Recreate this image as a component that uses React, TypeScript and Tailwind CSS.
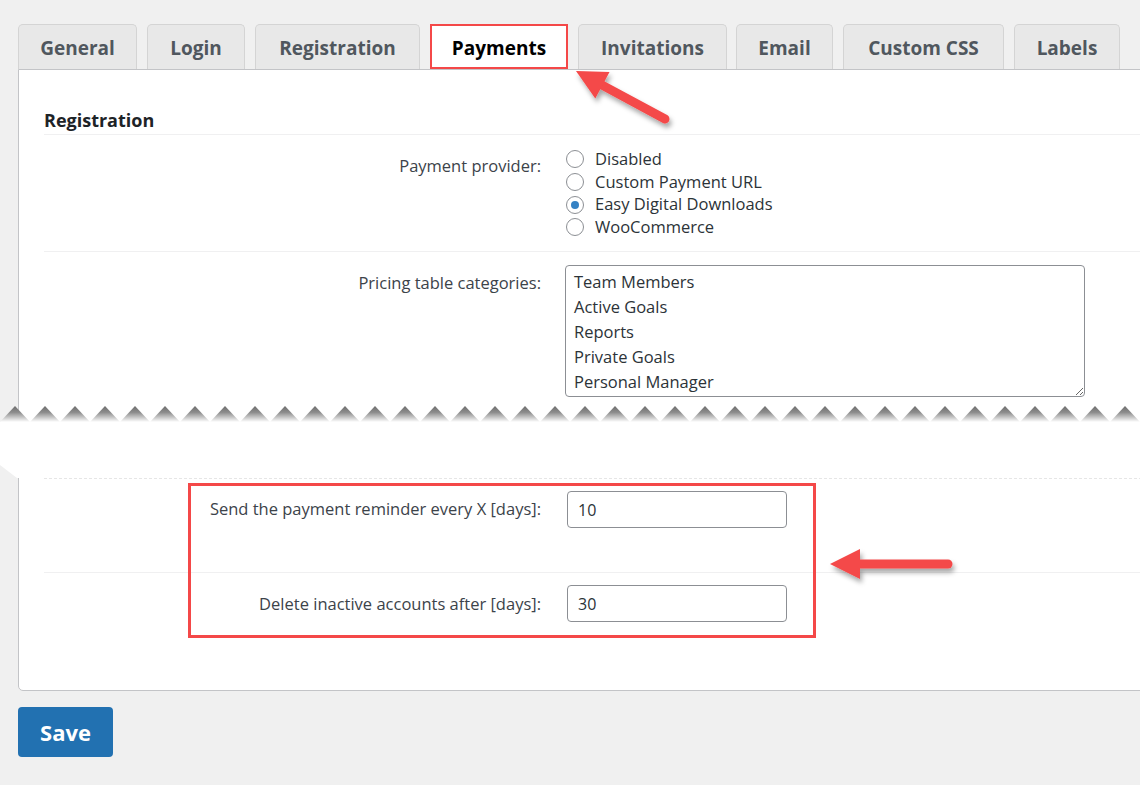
import React from "react";

const tabs = [
  { name: "General", w: "w-[119px]" },
  { name: "Login", w: "w-[98px]" },
  { name: "Registration", w: "w-[165px]" },
  { name: "Payments", w: "w-[138px]", active: true },
  { name: "Invitations", w: "w-[149px]" },
  { name: "Email", w: "w-[97px]" },
  { name: "Custom CSS", w: "w-[161px]" },
  { name: "Labels", w: "w-[106px]" },
];

const providers = ["Disabled", "Custom Payment URL", "Easy Digital Downloads", "WooCommerce"];
const categories = ["Team Members", "Active Goals", "Reports", "Private Goals", "Personal Manager"];

// radio button like the wp-admin one
function Radio({ checked, label }: { checked?: boolean; label: string }) {
  return (
    <label className="flex h-[22.7px] items-center gap-[11px] text-[#2c3338]">
      <span className="flex h-[18px] w-[18px] items-center justify-center rounded-full border border-[#8c8f94] bg-white">
        {checked && <span className="h-[8px] w-[8px] rounded-full bg-[#3582c4]" />}
      </span>
      {label}
    </label>
  );
}

// torn paper strip across the page
function TornStrip() {
  const teeth = [];
  for (let i = 0; i < 39; i++) {
    const x = i * 30;
    teeth.push(`${x},17 ${x + 15},1 ${x + 30},17`);
  }
  return (
    <svg className="absolute left-0 top-[405px]" width="1140" height="76" viewBox="0 0 1140 76">
      <defs>
        <linearGradient id="shade" x1="0" y1="0" x2="0" y2="1">
          <stop offset="0" stopColor="#6e6e6e" />
          <stop offset="0.4" stopColor="#8c8c8c" />
          <stop offset="0.75" stopColor="#cfcfcf" />
          <stop offset="1" stopColor="#ffffff" />
        </linearGradient>
      </defs>
      <path d="M0,17 L1140,17 L1140,73 L17,73 L0,60 Z" fill="#fff" />
      {teeth.map((p, i) => (
        <polygon key={i} points={p} fill="url(#shade)" />
      ))}
    </svg>
  );
}

// red callout arrow with a soft shadow
function Arrow({ x1, y1, x2, y2 }: { x1: number; y1: number; x2: number; y2: number }) {
  const ang = Math.atan2(y2 - y1, x2 - x1);
  const len = 30;
  const half = 15;
  const bx = x2 - Math.cos(ang) * len;
  const by = y2 - Math.sin(ang) * len;
  const px = -Math.sin(ang) * half;
  const py = Math.cos(ang) * half;
  return (
    <g filter="url(#arrowShadow)">
      <line x1={x1} y1={y1} x2={bx + Math.cos(ang) * 4} y2={by + Math.sin(ang) * 4} stroke="#f44848" strokeWidth="9" strokeLinecap="round" />
      <polygon points={`${x2},${y2} ${bx + px},${by + py} ${bx - px},${by - py}`} fill="#f44848" />
    </g>
  );
}

export default function App() {
  return (
    <div className="relative h-[785px] w-[1140px] overflow-hidden bg-[#f0f0f0] pl-[18px] pt-6 font-['Open_Sans',sans-serif] text-[16.5px]">
      {/* tabs */}
      <div className="flex gap-[10px]">
        {tabs.map((t, i) =>
          t.active ? (
            <div key={t.name} className={`${t.w} relative z-10 flex h-[45px] items-center justify-center border-2 border-[#f44848] bg-white pt-[3px] text-[19px] font-bold text-black`}>
              {t.name}
            </div>
          ) : (
            <div
              key={t.name}
              className={`${t.w} ${i === 4 ? "mr-[-1px]" : ""} flex h-[45px] items-center justify-center rounded-t-[5px] border border-b-0 border-[#d4d4d4] bg-[#e8e8e8] pt-[3px] text-[19px] font-bold text-[#50575e]`}
            >
              {t.name}
            </div>
          )
        )}
      </div>

      {/* settings panel */}
      <div className="h-[622px] w-[1140px] rounded-bl-[5px] border border-[#c3c4c7] bg-white pl-[25px] text-[#3c434a]">
        <h2 className="border-b border-[#f0f0f1] pb-[2px] pt-[38px] text-[18px] font-bold leading-[24px] text-[#1d2327]">Registration</h2>

        <div className="flex border-b border-[#f0f0f1]">
          <div className="w-[497px] pt-[20px] text-right leading-[22px]">Payment provider:</div>
          <div className="pb-[12px] pl-[25px] pt-[13px]">
            {providers.map((p, i) => (
              <Radio key={p} label={p} checked={i === 2} />
            ))}
          </div>
        </div>

        <div className="flex h-[226px]">
          <div className="w-[497px] pt-[20px] text-right leading-[22px]">Pricing table categories:</div>
          <div className="pl-[24px] pt-[13px]">
            <textarea
              readOnly
              defaultValue={categories.join("\n")}
              className="block h-[132px] w-[520px] overflow-hidden rounded-[4px] border border-[#8c8f94] px-[8px] pt-[3px] text-[16.5px] leading-[25px] text-[#2c3338] outline-none"
            />
          </div>
        </div>

        <div className="flex h-[94px] border-t border-dashed border-[#e6e6e6]">
          <div className="w-[497px] pt-[19px] text-right leading-[22px]">Send the payment reminder every X [days]:</div>
          <div className="pl-[26px] pt-[12px]">
            <input readOnly value="10" className="h-[37px] w-[220px] rounded-[4px] border border-[#8c8f94] px-[10px] pt-[2px] text-[16px] text-[#2c3338] outline-none" />
          </div>
        </div>

        <div className="flex border-t border-[#f0f0f1]">
          <div className="w-[497px] pt-[20px] text-right leading-[22px]">Delete inactive accounts after [days]:</div>
          <div className="pl-[26px] pt-[12px]">
            <input readOnly value="30" className="h-[37px] w-[220px] rounded-[4px] border border-[#8c8f94] px-[10px] pt-[2px] text-[16px] text-[#2c3338] outline-none" />
          </div>
        </div>
      </div>

      <button className="mt-[16px] h-[50px] w-[95px] rounded-[4px] bg-[#2271b1] text-[22px] font-bold text-white">Save</button>

      <TornStrip />

      {/* highlight box around the two day fields */}
      <div className="absolute left-[188px] top-[483px] h-[155px] w-[628px] border-[3px] border-[#f44848]" />

      <svg className="pointer-events-none absolute left-0 top-0" width="1140" height="785">
        <defs>
          <filter id="arrowShadow" x="-20%" y="-20%" width="140%" height="160%">
            <feDropShadow dx="2" dy="4" stdDeviation="2.5" floodColor="#000" floodOpacity="0.35" />
          </filter>
        </defs>
        <Arrow x1={665} y1={119} x2={576} y2={71} />
        <Arrow x1={948} y1={564} x2={830} y2={564} />
      </svg>
    </div>
  );
}
